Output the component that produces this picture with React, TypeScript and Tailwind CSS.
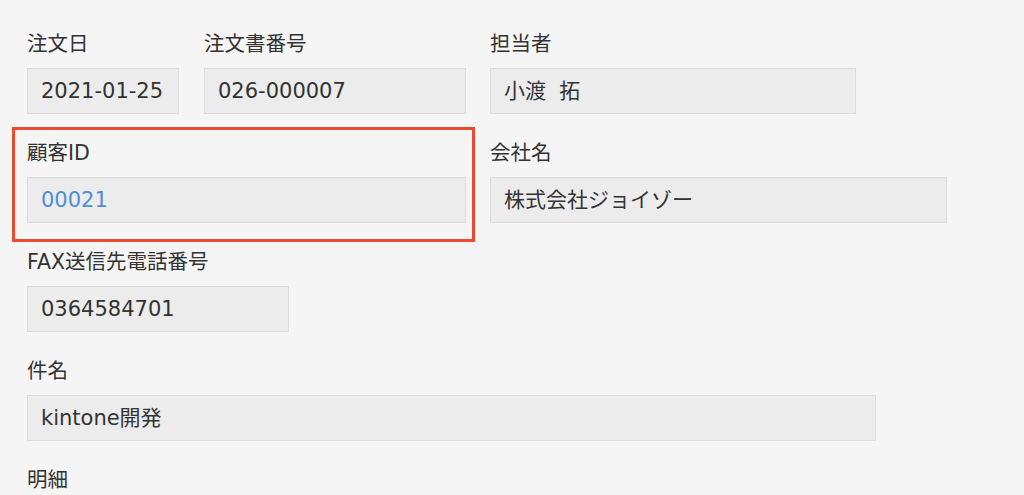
const labelFont = { fontFamily: '"DejaVu Sans", "Noto Sans CJK JP", sans-serif' };

type FieldProps = {
  label: string;
  value: string;
  width: string;
  link?: boolean;
};

function Field({ label, value, width, link }: FieldProps) {
  return (
    <div className={`flex flex-col ${width}`}>
      <div className="h-[28px] text-[20.5px] leading-[28px] text-[#333333] whitespace-nowrap">{label}</div>
      <div className="mt-[10px] flex h-[46px] items-center border border-[#dcdcdc] bg-[#ececec] pl-[13px] whitespace-pre">
        <span className={`text-[21px] leading-none ${link ? "text-[#4a90d9]" : "text-[#333333]"}`}>{value}</span>
      </div>
    </div>
  );
}

export default function App() {
  return (
    <div className="min-h-[495px] w-full overflow-hidden bg-[#f5f5f5] pl-[27px] pt-[30px]" style={labelFont}>
      <div className="flex flex-col gap-[25px]">
        <div className="flex">
          <Field label="注文日" value="2021-01-25" width="w-[152px]" />
          <div className="ml-[25px]">
            <Field label="注文書番号" value="026-000007" width="w-[262px]" />
          </div>
          <div className="ml-[24px]">
            <Field label="担当者" value="小渡  拓" width="w-[366px]" />
          </div>
        </div>

        <div className="flex">
          <div className="relative">
            {/* 強調枠 */}
            <span className="pointer-events-none absolute -left-[15px] -top-[12px] -right-[9px] -bottom-[19px] border-[3px] border-[#ee4a2e]" />
            <Field label="顧客ID" value="00021" width="w-[439px]" link />
          </div>
          <div className="ml-[24px]">
            <Field label="会社名" value="株式会社ジョイゾー" width="w-[457px]" />
          </div>
        </div>

        <Field label="FAX送信先電話番号" value="0364584701" width="w-[262px]" />

        <Field label="件名" value="kintone開発" width="w-[849px]" />

        <div className="h-[28px] text-[20.5px] leading-[28px] text-[#333333]">明細</div>
      </div>
    </div>
  );
}
